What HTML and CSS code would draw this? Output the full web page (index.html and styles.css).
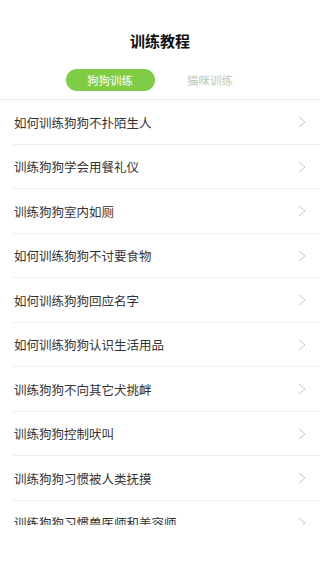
FILE: index.html
```html
<!DOCTYPE html>
<html lang="zh-CN">
<head>
  <meta charset="UTF-8">
  <meta name="viewport" content="width=device-width, initial-scale=1.0">
  <title>训练教程</title>
  <link rel="stylesheet" href="styles.css">
</head>
<body>
  <div class="header">
    <h1>训练教程</h1>
    <div class="tabs">
      <span class="tab active">狗狗训练</span>
      <span class="tab">猫咪训练</span>
    </div>
  </div>
  <ul class="list">
    <li><span>如何训练狗狗不扑陌生人</span><svg class="arrow" viewBox="0 0 8 12"><polyline points="1,1 7,6 1,11"/></svg></li>
    <li><span>训练狗狗学会用餐礼仪</span><svg class="arrow" viewBox="0 0 8 12"><polyline points="1,1 7,6 1,11"/></svg></li>
    <li><span>训练狗狗室内如厕</span><svg class="arrow" viewBox="0 0 8 12"><polyline points="1,1 7,6 1,11"/></svg></li>
    <li><span>如何训练狗狗不讨要食物</span><svg class="arrow" viewBox="0 0 8 12"><polyline points="1,1 7,6 1,11"/></svg></li>
    <li><span>如何训练狗狗回应名字</span><svg class="arrow" viewBox="0 0 8 12"><polyline points="1,1 7,6 1,11"/></svg></li>
    <li><span>如何训练狗狗认识生活用品</span><svg class="arrow" viewBox="0 0 8 12"><polyline points="1,1 7,6 1,11"/></svg></li>
    <li><span>训练狗狗不向其它犬挑衅</span><svg class="arrow" viewBox="0 0 8 12"><polyline points="1,1 7,6 1,11"/></svg></li>
    <li><span>训练狗狗控制吠叫</span><svg class="arrow" viewBox="0 0 8 12"><polyline points="1,1 7,6 1,11"/></svg></li>
    <li><span>训练狗狗习惯被人类抚摸</span><svg class="arrow" viewBox="0 0 8 12"><polyline points="1,1 7,6 1,11"/></svg></li>
    <li><span>训练狗狗习惯兽医师和美容师</span><svg class="arrow" viewBox="0 0 8 12"><polyline points="1,1 7,6 1,11"/></svg></li>
  </ul>
</body>
</html>
```

FILE: styles.css
```css
body {
  margin: 0;
  padding: 0;
  background-color: #fff;
  font-family: "Noto Sans CJK SC", "Noto Sans", sans-serif;
  color: #333;
}
.header {
  padding: 31px 0 8px;
  border-bottom: 1px solid #ececec;
  box-shadow: 0 1px 2px rgba(0, 0, 0, 0.04);
}
.header h1 {
  margin: 0;
  font-size: 15px;
  line-height: 20px;
  font-weight: bold;
  color: #111;
  text-align: center;
}
.tabs {
  display: flex;
  justify-content: center;
  gap: 11px;
  margin-top: 18px;
}
.tab {
  width: 89px;
  height: 22px;
  line-height: 22px;
  border-radius: 11px;
  text-align: center;
  font-size: 11.5px;
  color: #bccab0;
}
.tab.active {
  background-color: #7fcc45;
  color: #fff;
}
.list {
  list-style: none;
  margin: 0;
  padding: 0 0 0 13px;
  height: 425px;
  overflow: hidden;
}
.list li {
  display: flex;
  align-items: center;
  justify-content: space-between;
  box-sizing: border-box;
  height: 44.5px;
  padding: 1px 14px 0 1px;
  border-bottom: 1px solid #eeeeee;
  font-size: 12.5px;
}
.arrow {
  width: 8px;
  height: 12px;
  fill: none;
  stroke: #c6c6c6;
  stroke-width: 1;
}
```
